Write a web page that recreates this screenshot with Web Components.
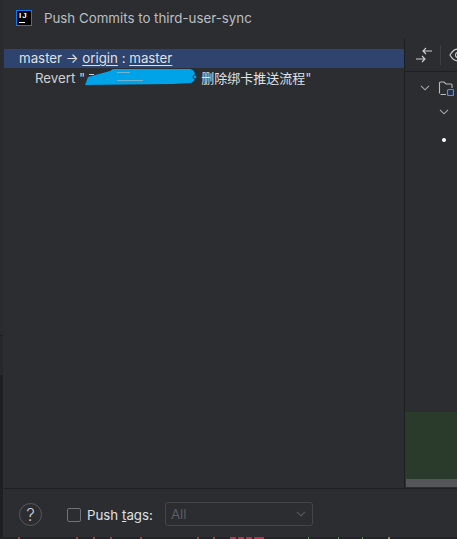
<!DOCTYPE html>
<html>
<head>
<meta charset="utf-8">
<title>Push Commits</title>
<style>
  html, body { margin: 0; height: 100%; background: #2b2d30; overflow: hidden; }
  body { font-family: Inter, "Noto Sans CJK SC", sans-serif; font-size: 13.3px; color: #dfe1e5; }
</style>
</head>
<body>
<push-dialog>
  <push-title slot="title">Push Commits to third-user-sync</push-title>
  <commit-tree slot="tree"></commit-tree>
  <changes-panel slot="changes"></changes-panel>
  <push-footer slot="footer"></push-footer>
</push-dialog>

<script>
// ----------------------
// Title bar
// ----------------------
class PushTitle extends HTMLElement {
  constructor() {
    super();
    this.attachShadow({ mode: 'open' });
    this.shadowRoot.innerHTML = `
      <style>
        :host { display: flex; align-items: center; height: 36px; padding-left: 12px; gap: 12px; box-sizing: border-box; }
        .logo { width: 16px; height: 16px; flex: none; box-sizing: border-box; background: #000; border: 1px solid #087cfa; position: relative; }
        .logo b { position: absolute; left: 2px; top: 1px; font: bold 8px/8px "Liberation Sans", sans-serif; color: #fff; letter-spacing: 1px; }
        .logo i { position: absolute; left: 2px; bottom: 2px; width: 6px; height: 1px; background: #fff; }
        span { color: #bcbec4; font-size: 13.3px; }
      </style>
      <div class="logo"><b>IJ</b><i></i></div>
      <span><slot></slot></span>
    `;
  }
}
customElements.define('push-title', PushTitle);

// ----------------------
// Commit tree
// ----------------------
class CommitTree extends HTMLElement {
  constructor() {
    super();
    this.attachShadow({ mode: 'open' });
    this.shadowRoot.innerHTML = `
      <style>
        :host { display: block; padding-top: 13px; font-size: 13.3px; color: #dfe1e5; }
        .row { height: 19px; line-height: 19px; white-space: nowrap; position: relative; }
        .branch { background: #2e436e; padding-left: 15px; }
        .branch u { text-underline-offset: 2px; }
        .commit { padding-left: 31px; height: 20px; line-height: 20px; color: #ced0d6; }
        .cjk { font-family: "Noto Sans CJK SC", sans-serif; font-size: 13px; color: #dfe1e5; }
        .gap { display: inline-block; width: 116px; }
        svg { position: absolute; left: 81px; top: 1px; }
      </style>
      <div class="row branch">master → <u>origin</u> : <u>master</u></div>
      <div class="row commit">Revert "<span class="gap"></span><span class="cjk">删除绑卡推送流程</span>"
        <svg width="114" height="17" viewBox="0 0 114 17">
          <path d="M28 0 L105 0 Q110 1 110 6 Q111 12 106 14 L88 15 L0 16 L3 8 L25 2 Z" fill="#00a2e8"/>
          <path d="M32 3.500h13M32 11.500h26" stroke="#6fb4d0" stroke-width="1" fill="none"/>
          <path d="M4 5.500h5" stroke="#ced0d6" stroke-width="1" fill="none"/>
          <circle cx="110" cy="8" r="2" fill="#00a2e8" stroke="#2b2d30" stroke-width="1"/>
        </svg>
      </div>
    `;
  }
}
customElements.define('commit-tree', CommitTree);

// ----------------------
// Right side: changed files
// ----------------------
class ChangesPanel extends HTMLElement {
  constructor() {
    super();
    this.attachShadow({ mode: 'open' });
    this.shadowRoot.innerHTML = `
      <style>
        :host { display: flex; flex-direction: column; flex: 1; min-height: 0; }
        .bar { height: 32px; flex: none; display: flex; align-items: center; padding-left: 11px; gap: 8px; border-bottom: 1px solid #1e1f22; }
        .sep { width: 1px; height: 20px; background: #3c3f43; flex: none; }
        .tree { flex: 1; display: flex; flex-direction: column; min-height: 0; }
        .line { display: flex; align-items: center; flex: none; }
        .l1 { height: 16px; padding-left: 15px; gap: 8px; margin-top: 8px; }
        .l2 { height: 16px; padding-left: 34px; margin-top: 8px; }
        .l3 { padding-left: 37px; margin-top: 18px; }
        .dot { width: 4px; height: 4px; border-radius: 50%; background: #fff; }
        .spacer { flex: 1; }
        .green { height: 67px; background: #2a3a2b; flex: none; }
        .scroll { height: 8px; background: #545659; flex: none; margin: 0 0 1px 1px; }
        svg { display: block; flex: none; }
      </style>
      <div class="bar">
        <svg width="16" height="16" viewBox="0 0 16 16" fill="none" stroke="#ced0d6" stroke-width="1.1">
          <path d="M16 4H7M10 1 7 4 10 7"/>
          <path d="M0 12H9M6 9 9 12 6 15"/>
        </svg>
        <div class="sep"></div>
        <svg width="20" height="16" viewBox="0 0 20 16" fill="none" stroke="#ced0d6" stroke-width="1.1">
          <path d="M1 8C3.500 3.500 6 2 9 2s5.500 1.500 8 6c-2.500 4.500-5 6-8 6S3.500 12.500 1 8Z"/>
          <circle cx="9" cy="8" r="2.500"/>
        </svg>
      </div>
      <div class="tree">
        <div class="line l1">
          <svg width="10" height="6" viewBox="0 0 10 6" fill="none" stroke="#a8aab0" stroke-width="1.1"><path d="M1 .8 5 4.800 9 .8"/></svg>
          <svg width="16" height="16" viewBox="0 0 16 16" fill="none">
            <path d="M2.500 14.500H8M1.500 13.500V3q0-1 1-1h3.500l2 2h5q1 0 1 1v3" stroke="#b8babf" stroke-width="1.1"/>
            <rect x="9.500" y="9.500" width="6" height="6" rx="1" fill="#25324d" stroke="#548af7" stroke-width="1.200"/>
          </svg>
        </div>
        <div class="line l2">
          <svg width="10" height="6" viewBox="0 0 10 6" fill="none" stroke="#a8aab0" stroke-width="1.1"><path d="M1 .8 5 4.800 9 .8"/></svg>
        </div>
        <div class="line l3"><div class="dot"></div></div>
        <div class="spacer"></div>
        <div class="green"></div>
        <div class="scroll"></div>
      </div>
    `;
  }
}
customElements.define('changes-panel', ChangesPanel);

// ----------------------
// Footer
// ----------------------
class PushFooter extends HTMLElement {
  constructor() {
    super();
    this.attachShadow({ mode: 'open' });
    this.shadowRoot.innerHTML = `
      <style>
        :host { display: flex; align-items: center; height: 48px; padding: 3px 0 0 15px; box-sizing: border-box; font-size: 13.3px; color: #dfe1e5; }
        .help { width: 23px; height: 23px; border: 1px solid #55585d; border-radius: 50%; display: flex; align-items: center; justify-content: center; color: #ced0d6; font-size: 17px; font-weight: 300; box-sizing: border-box; flex: none; }
        .check { width: 14px; height: 14px; border: 1px solid #6f737a; border-radius: 2px; box-sizing: border-box; margin-left: 25px; flex: none; }
        label { margin-left: 6px; }
        .select { margin: -1px 0 0 12px; width: 148px; height: 24px; box-sizing: border-box; border: 1px solid #43454a; border-radius: 3px; display: flex; align-items: center; justify-content: space-between; padding: 0 6px 0 5px; color: #5a5d63; }
        svg { display: block; }
      </style>
      <div class="help">?</div>
      <div class="check"></div>
      <label>Push <u>t</u>ags:</label>
      <div class="select">All
        <svg width="10" height="6" viewBox="0 0 10 6" fill="none" stroke="#5a5d63" stroke-width="1.1"><path d="M1 .8 5 4.800 9 .8"/></svg>
      </div>
    `;
  }
}
customElements.define('push-footer', PushFooter);

// ----------------------
// Dialog frame
// ----------------------
class PushDialog extends HTMLElement {
  constructor() {
    super();
    this.attachShadow({ mode: 'open' });
    this.shadowRoot.innerHTML = `
      <style>
        :host { display: flex; height: 539px; background: #2b2d30; }
        .edge { width: 3px; flex: none; display: flex; flex-direction: column; margin-right: 1px; }
        .edge .up { height: 335px; background: #292b2e; border-bottom: 1px solid #1e1f22; }
        .edge .mid { height: 39px; background: #26282b; }
        .edge .low { flex: 1; background: #1e1f22; }
        .main { flex: 1; display: flex; flex-direction: column; min-width: 0; }
        .top { flex: none; }
        .split { height: 452px; flex: none; display: flex; border-bottom: 1px solid #1e1f22; }
        .left { width: 400px; flex: none; }
        .right { flex: 1; display: flex; flex-direction: column; border-left: 1px solid #1e1f22; margin-top: 2px; padding-top: 1px; min-width: 0; overflow: hidden; }
        .strip { display: block; flex: none; margin-left: -4px; }
      </style>
      <div class="edge"><div class="up"></div><div class="mid"></div><div class="low"></div></div>
      <div class="main">
        <div class="top"><slot name="title"></slot></div>
        <div class="split">
          <div class="left"><slot name="tree"></slot></div>
          <div class="right"><slot name="changes"></slot></div>
        </div>
        <slot name="footer"></slot>
        <svg class="strip" width="457" height="2" viewBox="0 0 457 2">
          <rect width="457" height="2" fill="#232427"/>
          <g fill="#c22f3f">
            <rect x="18" width="2" height="2"/><rect x="76" width="2" height="2"/><rect x="93" width="2" height="2"/>
            <rect x="110" width="2" height="2"/><rect x="140" width="2" height="2"/><rect x="197" width="2" height="2"/>
            <rect x="213" width="2" height="2"/><rect x="230" width="6" height="2"/><rect x="238" width="6" height="2"/>
            <rect x="246" width="6" height="2"/><rect x="254" width="10" height="2"/>
          </g>
          <g fill="#4fa04a"><rect x="308" width="1" height="2"/><rect x="338" width="1" height="2"/><rect x="362" width="1" height="2"/></g>
          <rect x="388" width="2" height="2" fill="#a08a3a"/>
        </svg>
      </div>
    `;
  }
}
customElements.define('push-dialog', PushDialog);
</script>
</body>
</html>
